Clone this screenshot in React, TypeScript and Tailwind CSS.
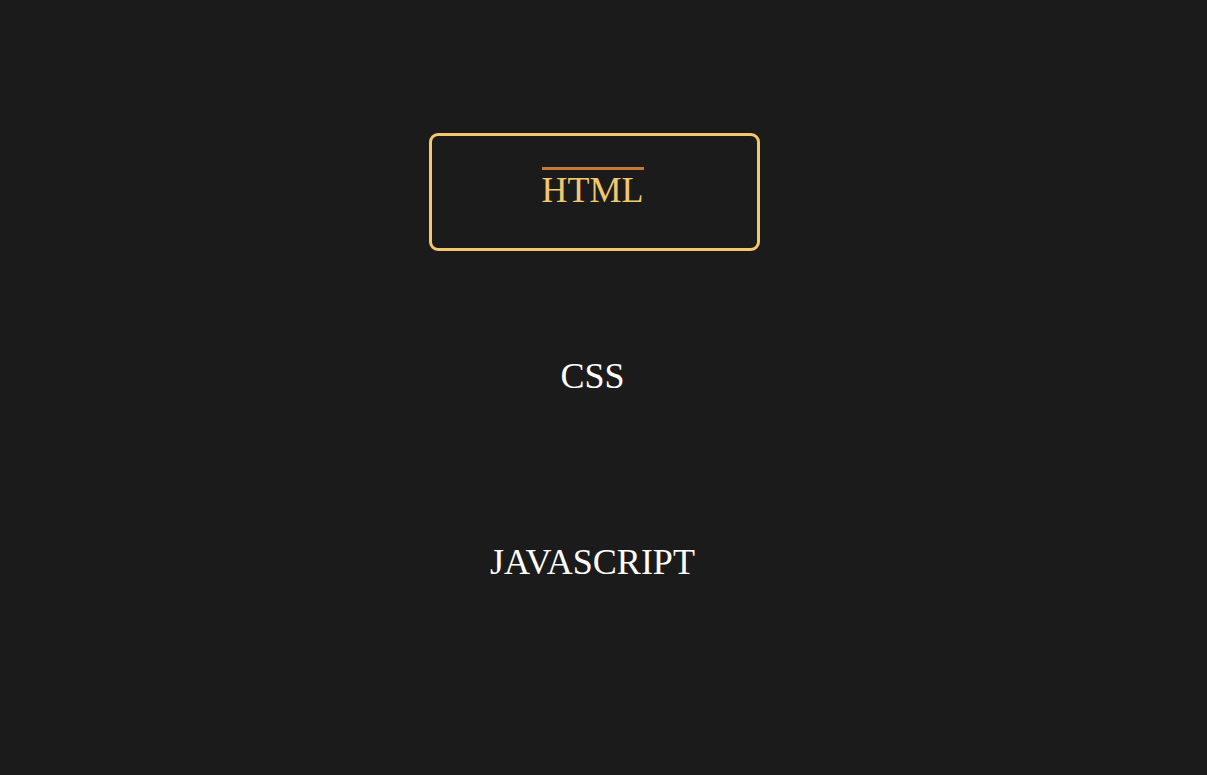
import React from "react";

const items = ["HTML", "CSS", "JAVASCRIPT"];

export default function App() {
  return (
    <div className="min-h-[775px] w-full bg-[#1b1b1b] pr-[18px] pt-[133px]" style={{ fontFamily: '"Liberation Serif", serif' }}>
      <div className="flex flex-col items-center gap-[68px]">
        {items.map((t, i) => {
          const active = i === 0;
          return (
            <div
              key={t}
              className={
                "flex h-[118px] w-[331px] items-center justify-center rounded-[9px] border-[3px] pb-[9px] pr-[4px] " +
                (active ? "border-[#f2c76e]" : "border-transparent")
              }
            >
              <div className="inline-flex flex-col items-stretch">
                <div className={"h-[3px] " + (active ? "bg-[#c47a3c]" : "bg-transparent")} />
                <span
                  className={
                    "mt-[2px] text-[36px] leading-none " + (active ? "text-[#f2c76e]" : "text-white")
                  }
                >
                  {t}
                </span>
              </div>
            </div>
          );
        })}
      </div>
    </div>
  );
}
